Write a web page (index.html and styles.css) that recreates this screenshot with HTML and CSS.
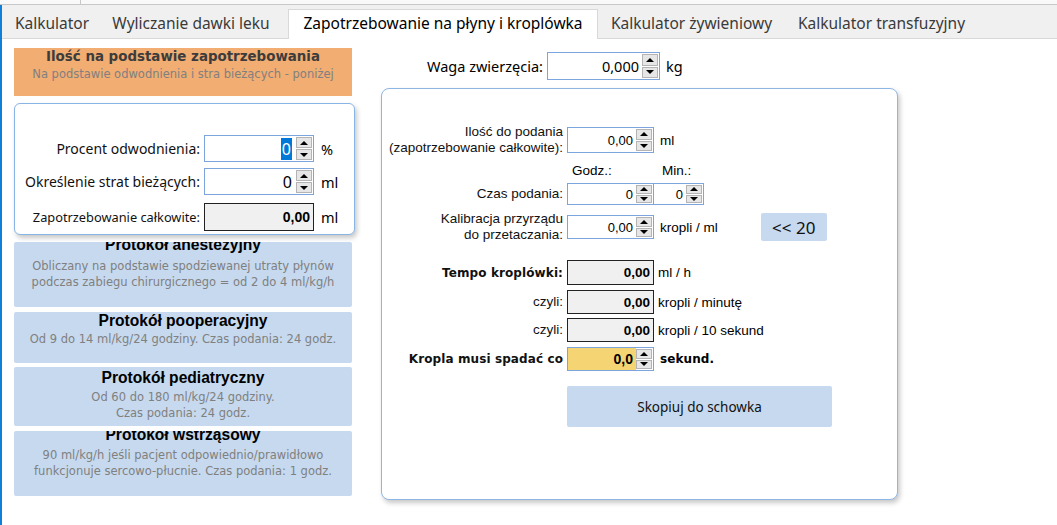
FILE: index.html
```html
<!DOCTYPE html>
<html lang="pl">
<head>
    <meta charset="UTF-8">
    <title>Zapotrzebowanie na płyny i kroplówka</title>
    <link rel="stylesheet" href="styles.css">
</head>
<body>
    <div class="topbar"><span class="tick"></span></div>

    <div class="main">
        <div class="tabs">
            <div class="tab t1">Kalkulator</div>
            <div class="tab t2">Wyliczanie dawki leku</div>
            <div class="tab t3 active">Zapotrzebowanie na płyny i kroplówka</div>
            <div class="tab t4">Kalkulator żywieniowy</div>
            <div class="tab t5">Kalkulator transfuzyjny</div>
        </div>

        <div class="page">
            <!-- left column -->
            <div class="left-col">
                <div class="banner">
                    <div class="banner-title">Ilość na podstawie zapotrzebowania</div>
                    <div class="banner-sub">Na podstawie odwodnienia i stra bieżących - poniżej</div>
                </div>

                <div class="card left-card">
                    <div class="lrow">
                        <label class="llabel">Procent odwodnienia:</label>
                        <div class="num big">
                            <span class="val"><span class="sel">0</span></span>
                            <span class="spin"><i class="up"></i><i class="down"></i></span>
                        </div>
                        <span class="lunit">%</span>
                    </div>
                    <div class="lrow r2">
                        <label class="llabel">Określenie strat bieżących:</label>
                        <div class="num big">
                            <span class="val">0</span>
                            <span class="spin"><i class="up"></i><i class="down"></i></span>
                        </div>
                        <span class="lunit">ml</span>
                    </div>
                    <div class="lrow r3">
                        <label class="llabel small">Zapotrzebowanie całkowite:</label>
                        <div class="readonly big">0,00</div>
                        <span class="lunit">ml</span>
                    </div>
                </div>

                <div class="proto p1">
                    <div class="proto-title">Protokół anestezyjny</div>
                    <div class="proto-desc">Obliczany na podstawie spodziewanej utraty płynów<br>podczas zabiegu chirurgicznego = od 2 do 4 ml/kg/h</div>
                </div>
                <div class="proto p2">
                    <div class="proto-title">Protokół pooperacyjny</div>
                    <div class="proto-desc">Od 9 do 14 ml/kg/24 godziny. Czas podania: 24 godz.</div>
                </div>
                <div class="proto p3">
                    <div class="proto-title">Protokół pediatryczny</div>
                    <div class="proto-desc">Od 60 do 180 ml/kg/24 godziny.<br>Czas podania: 24 godz.</div>
                </div>
                <div class="proto p4">
                    <div class="proto-title">Protokół wstrząsowy</div>
                    <div class="proto-desc">90 ml/kg/h jeśli pacjent odpowiednio/prawidłowo<br>funkcjonuje sercowo-płucnie. Czas podania: 1 godz.</div>
                </div>
            </div>

            <!-- right column -->
            <div class="right-col">
                <div class="weight-row">
                    <label class="wlabel">Waga zwierzęcia:</label>
                    <div class="num weight">
                        <span class="val">0,000</span>
                        <span class="spin"><i class="up"></i><i class="down"></i></span>
                    </div>
                    <span class="wunit">kg</span>
                </div>

                <div class="card right-card">
                    <div class="rrow row-amount">
                        <label class="rlabel">Ilość do podania<br>(zapotrzebowanie całkowite):</label>
                        <div class="num">
                            <span class="val">0,00</span>
                            <span class="spin"><i class="up"></i><i class="down"></i></span>
                        </div>
                        <span class="runit">ml</span>
                    </div>

                    <div class="rrow row-heads">
                        <span class="head-h">Godz.:</span>
                        <span class="head-m">Min.:</span>
                    </div>

                    <div class="rrow row-time">
                        <label class="rlabel">Czas podania:</label>
                        <div class="num">
                            <span class="val">0</span>
                            <span class="spin"><i class="up"></i><i class="down"></i></span>
                        </div>
                        <div class="num minutes">
                            <span class="val">0</span>
                            <span class="spin"><i class="up"></i><i class="down"></i></span>
                        </div>
                    </div>

                    <div class="rrow row-cal">
                        <label class="rlabel">Kalibracja przyrządu<br>do przetaczania:</label>
                        <div class="num">
                            <span class="val">0,00</span>
                            <span class="spin"><i class="up"></i><i class="down"></i></span>
                        </div>
                        <span class="runit">kropli / ml</span>
                        <button class="btn btn-20">&lt;&lt; 20</button>
                    </div>

                    <div class="rrow row-tempo">
                        <label class="rlabel strong">Tempo kroplówki:</label>
                        <div class="readonly">0,00</div>
                        <span class="runit tight">ml / h</span>
                    </div>

                    <div class="rrow row-c1">
                        <label class="rlabel">czyli:</label>
                        <div class="readonly">0,00</div>
                        <span class="runit tight">kropli / minutę</span>
                    </div>

                    <div class="rrow row-c2">
                        <label class="rlabel">czyli:</label>
                        <div class="readonly">0,00</div>
                        <span class="runit tight">kropli / 10 sekund</span>
                    </div>

                    <div class="rrow row-drop">
                        <label class="rlabel strong">Kropla musi spadać co</label>
                        <div class="num yellow">
                            <span class="val">0,0</span>
                            <span class="spin"><i class="up"></i><i class="down"></i></span>
                        </div>
                        <span class="runit strong">sekund.</span>
                    </div>

                    <div class="rrow row-copy">
                        <button class="btn btn-copy">Skopiuj do schowka</button>
                    </div>
                </div>
            </div>
        </div>
    </div>
</body>
</html>
```

FILE: styles.css
```css
body {
    margin: 0;
    background-color: #fff;
    font-family: "Liberation Sans", Arial, sans-serif;
    font-size: 13.5px;
    color: #000;
    height: 525px;
    overflow: hidden;
}
.topbar {
    height: 4px;
    border-bottom: 1px solid #c8c8c8;
    background-color: #f9f9f9;
}
.tick {
    display: block;
    margin-left: 80px;
    width: 1px;
    height: 4px;
    background-color: #c8c8c8;
}
.main {
    border-left: 2px solid #0f7fd8;
    height: 520px;
}

/* tabs */
.tabs {
    display: flex;
    align-items: flex-end;
    height: 33px;
    padding-left: 2px;
    background-color: #f0f0f0;
    border-bottom: 1px solid #d9d9d9;
    font-family: "Noto Sans", "Open Sans", sans-serif;
    font-size: 15.5px;
    color: #3a3a3a;
}
.tab {
    height: 28px;
    line-height: 26px;
    text-align: center;
    white-space: nowrap;
}
.t1 { width: 96px; }
.t2 { width: 182px; }
.t3 { width: 308px; margin-left: 6px; }
.t4 { width: 187px; }
.t5 { width: 193px; }
.tab.active {
    background-color: #fff;
    border: 1px solid #d9d9d9;
    border-bottom: none;
    height: 29px;
    margin-bottom: -1px;
    color: #000;
}

/* page */
.page {
    display: flex;
}
.left-col {
    width: 341px;
    margin-left: 12px;
    padding-top: 9px;
    display: flex;
    flex-direction: column;
}
.banner {
    width: 338px;
    height: 48px;
    box-sizing: border-box;
    padding-top: 1px;
    background-color: #f2ad72;
    text-align: center;
    font-family: "DejaVu Sans", Verdana, sans-serif;
}
.banner-title {
    font-weight: bold;
    font-size: 13.4px;
    color: #3c3c3c;
    line-height: 15px;
}
.banner-sub {
    font-size: 11.5px;
    color: #808080;
    margin-top: 3px;
}
.card {
    background-color: #fff;
    border: 1px solid #88b4e6;
    border-radius: 6px;
    box-shadow: 2px 3px 5px rgba(0, 0, 0, 0.22);
}
.left-card {
    margin-top: 7px;
    height: 132px;
    box-sizing: border-box;
    padding-top: 31px;
}
.lrow {
    display: flex;
    align-items: center;
    height: 27px;
}
.lrow.r2 { margin-top: 6px; }
.lrow.r3 { margin-top: 8px; height: 28px; }
.llabel {
    width: 185px;
    text-align: right;
    padding-right: 4px;
    font-family: "Noto Sans", "Open Sans", sans-serif;
    font-size: 14px;
    color: #111;
}
.llabel.small {
    font-size: 12.8px;
}
.lunit {
    margin-left: 7px;
    font-family: "Noto Sans", "Open Sans", sans-serif;
    font-size: 14.5px;
}

/* numeric inputs */
.num {
    display: flex;
    box-sizing: border-box;
    width: 87px;
    height: 100%;
    border: 1px solid #7ba5dc;
    background-color: #fff;
}
.num.big {
    width: 110px;
}
.num.big .val {
    font-family: "Noto Sans", "Open Sans", sans-serif;
    font-size: 16px;
    padding-right: 4px;
}
.val {
    flex: 1;
    align-self: center;
    text-align: right;
    padding-right: 3px;
    font-size: 13px;
}
.sel {
    background-color: #0078d7;
    color: #fff;
    padding: 0 1px;
}
.spin {
    width: 17px;
    display: flex;
    flex-direction: column;
    padding: 1px 1px 1px 0;
    gap: 1px;
    box-sizing: border-box;
}
.spin i {
    flex: 1;
    display: flex;
    align-items: center;
    justify-content: center;
    background-color: #e6e6e6;
    border: 1px solid #b4b4b4;
}
.spin .up::after {
    content: "";
    border-left: 4px solid transparent;
    border-right: 4px solid transparent;
    border-bottom: 4px solid #000;
}
.spin .down::after {
    content: "";
    border-left: 4px solid transparent;
    border-right: 4px solid transparent;
    border-top: 4px solid #000;
}
.readonly {
    box-sizing: border-box;
    width: 87px;
    height: 100%;
    border: 1px solid #222;
    background-color: #f0f0f0;
    font-weight: bold;
    font-size: 13.5px;
    padding-right: 3px;
    display: flex;
    align-items: center;
    justify-content: flex-end;
}
.readonly.big {
    width: 110px;
    font-size: 14px;
}

/* protocols */
.proto {
    width: 338px;
    box-sizing: border-box;
    background-color: #c6d9ee;
    border-radius: 2px;
    text-align: center;
    overflow: hidden;
}
.proto-title {
    font-weight: bold;
    font-size: 15.6px;
    line-height: 18px;
    color: #000;
}
.proto-desc {
    font-family: "DejaVu Sans", Verdana, sans-serif;
    font-size: 11.5px;
    line-height: 16px;
    color: #808080;
    margin-top: 2px;
}
.p1 { margin-top: 7px; height: 65px; }
.p1 .proto-title { margin-top: -6px; }
.p1 .proto-desc { margin-top: 4px; }
.p2 { margin-top: 5px; height: 51px; }
.p2 .proto-title { margin-top: 0; }
.p2 .proto-desc { margin-top: 1px; }
.p3 { margin-top: 4px; height: 59px; }
.p3 .proto-title { margin-top: 2px; }
.p4 { margin-top: 5px; height: 65px; }
.p4 .proto-title { margin-top: -5px; }
.p4 .proto-desc { margin-top: 3px; }

/* right column */
.right-col {
    margin-left: 26px;
    padding-top: 13px;
    display: flex;
    flex-direction: column;
}
.weight-row {
    display: flex;
    align-items: center;
    height: 28px;
}
.wlabel {
    width: 162px;
    text-align: right;
    padding-right: 4px;
    font-family: "Noto Sans", "Open Sans", sans-serif;
    font-size: 14.5px;
}
.num.weight {
    width: 113px;
}
.num.weight .val {
    font-family: "Noto Sans", "Open Sans", sans-serif;
    font-size: 14.5px;
}
.wunit {
    margin-left: 6px;
    font-family: "Noto Sans", "Open Sans", sans-serif;
    font-size: 14.5px;
}
.right-card {
    margin-top: 8px;
    width: 517px;
    height: 412px;
    box-sizing: border-box;
    border-radius: 8px;
    border-color: #8fb6e3;
    padding-top: 38px;
    display: flex;
    flex-direction: column;
}
.rrow {
    display: flex;
    align-items: center;
}
.rlabel {
    width: 181px;
    text-align: right;
    padding-right: 4px;
    line-height: 16px;
    color: #111;
}
.strong {
    font-family: "DejaVu Sans", Verdana, sans-serif;
    font-weight: bold;
    font-size: 12px;
    letter-spacing: 0.1px;
}
.runit {
    margin-left: 6px;
}
.runit.tight {
    margin-left: 4px;
}
.row-amount { height: 26px; }
.row-heads {
    margin-top: 9px;
    height: 16px;
    padding-left: 190px;
}
.head-h { width: 90px; }
.row-time { margin-top: 5px; height: 22px; }
.num.minutes { width: 51px; margin-left: -1px; }
.row-cal { margin-top: 8px; height: 28px; }
.row-cal .num { height: 24px; }
.row-tempo { margin-top: 19px; height: 25px; }
.row-c1 { margin-top: 5px; height: 24px; }
.row-c2 { margin-top: 4px; height: 24px; }
.row-drop { margin-top: 5px; height: 24px; }
.num.yellow {
    background-color: #f5d573;
}
.num.yellow .val {
    font-weight: bold;
    font-size: 14px;
}
.num.yellow .spin {
    background-color: #fff;
}
.row-copy {
    margin-top: 15px;
    height: 41px;
    padding-left: 185px;
}

/* buttons */
.btn {
    background-color: #c6d9ee;
    border: none;
    border-radius: 2px;
    color: #111;
    font-family: "Noto Sans", "Open Sans", sans-serif;
    cursor: pointer;
}
.btn-20 {
    margin-left: 43px;
    width: 66px;
    height: 28px;
    font-size: 17px;
}
.btn-copy {
    width: 265px;
    height: 41px;
    font-size: 13.5px;
}
```
